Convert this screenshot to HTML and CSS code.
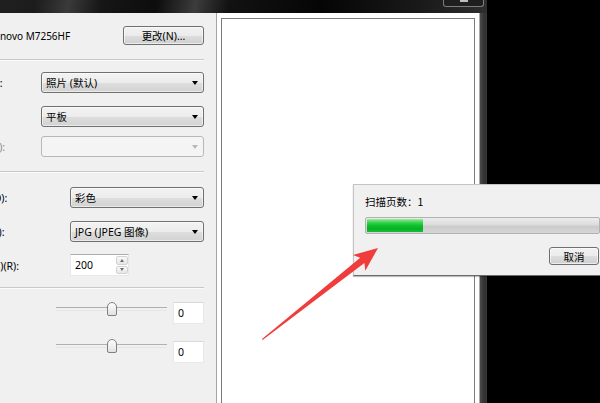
FILE: index.html
```html
<!DOCTYPE html>
<html lang="zh-CN">
<head>
    <meta charset="UTF-8">
    <title>新扫描</title>
    <link rel="stylesheet" href="styles.css">
</head>
<body>
    <div class="window">
        <div class="titlebar">
            <div class="caption-btn"><span class="caption-mark"></span></div>
        </div>
        <div class="client">
            <div class="panel">
                <div class="device-row">
                    <span class="device-label">扫描仪:</span>
                    <span class="device-name">Lenovo M7256HF</span>
                    <button class="btn change-btn">更改(N)...</button>
                </div>

                <div class="sep sep-1"></div>

                <div class="field field-profile">
                    <span class="label narrow">配置文件(I):</span>
                    <div class="combo"><span>照片 (默认)</span><span class="caret"></span></div>
                </div>
                <div class="field field-source">
                    <span class="label narrow">来源(S):</span>
                    <div class="combo"><span>平板</span><span class="caret"></span></div>
                </div>
                <div class="field field-paper">
                    <span class="label narrow disabled">纸张大小(Z):</span>
                    <div class="combo is-disabled"><span></span><span class="caret"></span></div>
                </div>

                <div class="sep sep-2"></div>

                <div class="field field-color">
                    <span class="label wide">颜色格式(O):</span>
                    <div class="combo"><span>彩色</span><span class="caret"></span></div>
                </div>
                <div class="field field-type">
                    <span class="label wide">文件类型(F):</span>
                    <div class="combo"><span>JPG (JPEG 图像)</span><span class="caret"></span></div>
                </div>
                <div class="field field-dpi">
                    <span class="label wide">分辨率(DPI)(R):</span>
                    <div class="spin">
                        <span class="spin-value">200</span>
                        <div class="spin-buttons">
                            <span class="spin-up"></span>
                            <span class="spin-down"></span>
                        </div>
                    </div>
                </div>

                <div class="sep sep-3"></div>

                <div class="slider-row slider-brightness">
                    <span class="label slider-label">亮度(B):</span>
                    <div class="slider"><span class="thumb"></span></div>
                    <span class="textbox">0</span>
                </div>
                <div class="slider-row slider-contrast">
                    <span class="label slider-label">对比度(C):</span>
                    <div class="slider"><span class="thumb"></span></div>
                    <span class="textbox">0</span>
                </div>

                <div class="check-row">
                    <span class="checkbox"></span>
                    <span>预览或扫描为单独文件(P)</span>
                </div>
            </div>
            <div class="preview">
                <div class="preview-box"></div>
            </div>
            <div class="frame-right"></div>
        </div>
    </div>

    <div class="progress-dialog">
        <div class="progress-text">扫描页数：1</div>
        <div class="progress-bar"><div class="progress-fill"></div></div>
        <div class="progress-actions">
            <button class="btn cancel-btn">取消</button>
        </div>
    </div>

    <svg class="arrow" width="600" height="403" viewBox="0 0 600 403">
        <polygon points="262,339 360.2,257.7 352.9,254.9 378,248 365.3,270.7 364.4,263 262.6,340" fill="#f03c3c"/>
    </svg>
</body>
</html>
```

FILE: styles.css
```css
* {
    margin: 0;
    padding: 0;
    box-sizing: border-box;
}

body {
    background: #000;
    font-family: 'Noto Sans', 'Noto Sans CJK SC', sans-serif;
    font-size: 10.5px;
    color: #000;
    height: 100vh;
    overflow: hidden;
    position: relative;
}

/* the window is cut off on the left by the screenshot */
.window {
    width: 551px;
    height: 100%;
    margin-left: -64px;
    display: flex;
    flex-direction: column;
}

.titlebar {
    height: 13px;
    flex-shrink: 0;
    display: flex;
    justify-content: flex-end;
    align-items: flex-start;
    background: linear-gradient(100deg, #262626 0%, #1c1c1c 18%, #3a3a3a 24%, #161616 30%, #0d0d0d 40%, #3c3c3c 47%, #121212 53%, #050505 70%, #1a1a1a 88%, #2e2e2e 100%);
}

.caption-btn {
    width: 41px;
    height: 7px;
    margin-right: 3px;
    border: 1px solid #7c7c7c;
    border-top: none;
    border-radius: 0 0 3px 3px;
    background: #1e1e1e;
    display: flex;
    justify-content: center;
}

.caption-mark {
    width: 8px;
    height: 2px;
    background: #bdbdbd;
}

.client {
    flex: 1;
    display: flex;
    min-height: 0;
}

.panel {
    width: 281px;
    flex-shrink: 0;
    background: #f0f0f0;
    border-right: 1px solid #a5a5a5;
    padding: 13px 12px 0 12px;
    overflow: hidden;
}

.device-row {
    display: flex;
    align-items: center;
    height: 19px;
}

.device-label {
    width: 41px;
    flex-shrink: 0;
    white-space: nowrap;
}

.device-name {
    white-space: nowrap;
    font-size: 10px;
}

.btn {
    font-family: 'Noto Sans', 'Noto Sans CJK SC', sans-serif;
    font-size: 10.5px;
    color: #000;
    border: 1px solid #707070;
    border-radius: 3px;
    background: linear-gradient(#f2f2f2 0%, #ebebeb 50%, #dddddd 51%, #cfcfcf 100%);
    box-shadow: inset 0 0 0 1px rgba(255, 255, 255, 0.6);
    display: flex;
    align-items: center;
    justify-content: center;
}

.change-btn {
    width: 81px;
    height: 19px;
    margin-left: auto;
}

.sep {
    height: 2px;
    border-top: 1px solid #c8c8c8;
    border-bottom: 1px solid #fbfbfb;
}

.sep-1 { margin-top: 14px; }
.sep-2 { margin-top: 14px; }
.sep-3 { margin-top: 11px; }

.field {
    display: flex;
    align-items: center;
}

.field-profile { margin-top: 11px; }
.field-source { margin-top: 13px; }
.field-paper { margin-top: 9px; }
.field-color { margin-top: 14px; }
.field-type { margin-top: 13px; }
.field-dpi { margin-top: 12px; }

.label {
    flex-shrink: 0;
    white-space: nowrap;
}

.label.narrow { width: 93px; }
.label.wide { width: 122px; }
.label.disabled { color: #8d8d8d; }

.combo {
    flex: 1;
    height: 21px;
    border: 1px solid #707070;
    border-radius: 3px;
    background: linear-gradient(#f3f3f3 0%, #ececec 50%, #dedede 51%, #d2d2d2 100%);
    box-shadow: inset 0 0 0 1px rgba(255, 255, 255, 0.55);
    display: flex;
    align-items: center;
    justify-content: space-between;
    padding: 0 5px 0 4px;
    white-space: nowrap;
}

.caret {
    width: 0;
    height: 0;
    border-left: 3.5px solid transparent;
    border-right: 3.5px solid transparent;
    border-top: 4px solid #000;
}

.combo.is-disabled {
    border-color: #b5b9bc;
    background: #f4f4f4;
    box-shadow: none;
}

.combo.is-disabled .caret {
    border-top-color: #b5b9bc;
}

.spin {
    width: 59px;
    height: 22px;
    background: #fff;
    border: 1px solid #e3e9ef;
    border-top-color: #abadb3;
    display: flex;
    justify-content: space-between;
}

.spin-value {
    padding: 3px 0 0 4px;
}

.spin-buttons {
    width: 12px;
    display: flex;
    flex-direction: column;
    gap: 1px;
    padding: 1px 0;
}

.spin-up,
.spin-down {
    flex: 1;
    border: 1px solid #d3d3d3;
    border-radius: 2px;
    background: linear-gradient(#f8f8f8, #e6e6e6);
    display: flex;
    align-items: center;
    justify-content: center;
}

.spin-up::after,
.spin-down::after {
    content: '';
    border-left: 2.5px solid transparent;
    border-right: 2.5px solid transparent;
}

.spin-up::after { border-bottom: 3px solid #6d6d6d; }
.spin-down::after { border-top: 3px solid #6d6d6d; }

.slider-row {
    display: flex;
    align-items: flex-start;
}

.slider-brightness { margin-top: 13px; }
.slider-contrast { margin-top: 17px; }

.slider-label {
    width: 108px;
}

.slider {
    width: 111px;
    height: 14px;
    position: relative;
    margin-right: 6px;
}

.slider-contrast .slider {
    margin-top: -2px;
}

.slider::before {
    content: '';
    display: block;
    height: 2px;
    margin-top: 5px;
    border-top: 1px solid #b0b0b0;
    border-bottom: 1px solid #e6e6e6;
}

.thumb {
    position: absolute;
    top: 0;
    left: calc(50% - 5px);
    width: 10px;
    height: 14px;
    border: 1px solid #808080;
    border-radius: 5px 5px 2px 2px;
    background: linear-gradient(#fdfdfd, #e2e2e2);
}

.textbox {
    width: 31px;
    height: 22px;
    background: #fff;
    border: 1px solid #e3e9ef;
    border-top-color: #d6d8dd;
    padding: 3px 0 0 4px;
}

.check-row {
    display: flex;
    align-items: flex-start;
    gap: 4px;
    margin-top: 40px;
    margin-left: 55px;
    color: #555;
    white-space: nowrap;
    line-height: 10px;
}

.checkbox {
    width: 9px;
    height: 9px;
    border: 1px solid #8e8f8f;
    background: linear-gradient(#dcdcdc, #f4f4f4);
}

.preview {
    width: 262px;
    flex-shrink: 0;
    background: #fff;
    padding: 5px 4px 0 4px;
}

.preview-box {
    height: 100%;
    border: 1px solid #7c7c7c;
    border-bottom: none;
    background: #fff;
}

.frame-right {
    width: 8px;
    flex-shrink: 0;
    border-left: 1px solid #a9a9a9;
    background: linear-gradient(90deg, #4a4a4a, #2f2f2f 70%, #3b3b3b);
}

.progress-dialog {
    position: absolute;
    left: 353px;
    top: 184px;
    width: 260px;
    height: 92px;
    background: #f0f0f0;
    border: 1px solid #c4c4c4;
    border-bottom-color: #6a6a6a;
    box-shadow: 0 1px 1px rgba(0, 0, 0, 0.25);
    padding: 10px 0 0 11px;
}

.progress-text {
    font-family: 'Noto Sans CJK SC', sans-serif;
    line-height: 14px;
}

.progress-bar {
    width: 235px;
    height: 17px;
    margin-top: 8px;
    border: 1px solid #b2b2b2;
    border-radius: 2px;
    background: linear-gradient(#ececec 0%, #dcdcdc 45%, #cbcbcb 55%, #d6d6d6 100%);
    padding: 1px;
}

.progress-fill {
    width: 56px;
    height: 100%;
    background: linear-gradient(#9ceaa0 0%, #3fd451 25%, #0fc12c 50%, #06b025 75%, #18bd35 100%);
}

.progress-actions {
    width: 235px;
    display: flex;
    justify-content: flex-end;
    margin-top: 13px;
}

.cancel-btn {
    width: 50px;
    height: 18px;
    margin-right: 1px;
}

.arrow {
    position: absolute;
    left: 0;
    top: 0;
    pointer-events: none;
}
```
